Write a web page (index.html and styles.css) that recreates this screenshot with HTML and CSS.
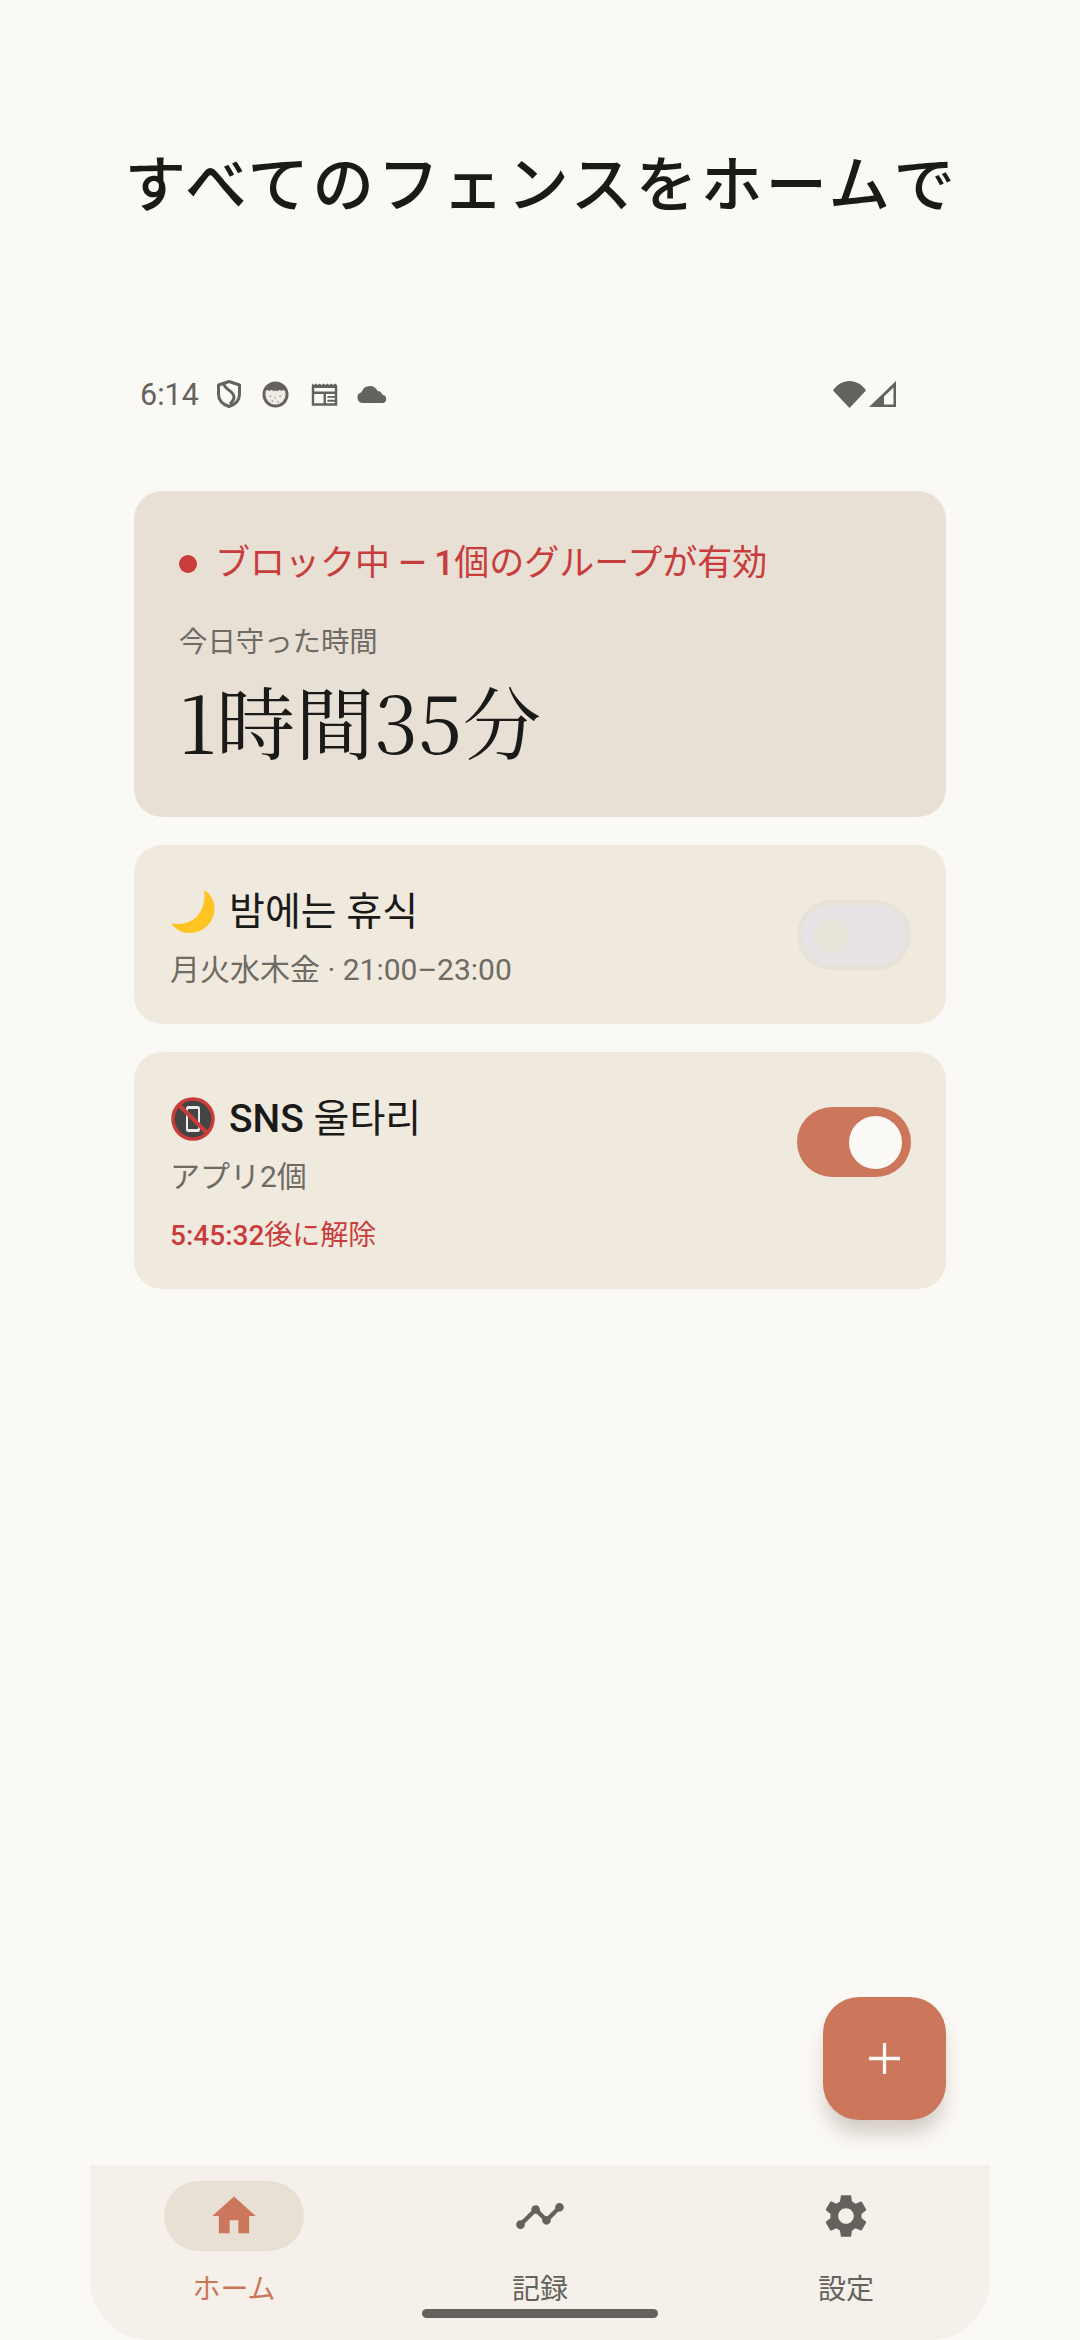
FILE: index.html
```html
<!DOCTYPE html>
<html lang="ja">

<head>
    <meta charset="UTF-8">
    <meta name="viewport" content="width=device-width, initial-scale=1.0">
    <title>Fence</title>
    <link rel="stylesheet" href="styles.css">
</head>

<body>
    <h1 class="headline">すべてのフェンスをホームで</h1>

    <div class="device">
        <div class="status-bar">
            <span class="status-time">6:14</span>
            <svg class="status-icon shield" viewBox="0 0 24 28">
                <path d="M12 1.5 22.5 5v9c0 6-4.500 10.500-10.500 12.500C6 24.500 1.500 20 1.500 14V5z" fill="none" stroke="currentColor" stroke-width="3" stroke-linejoin="round" />
                <path d="M7 4c0 5 10 7 10 13 0 3-2 5-4 7" fill="none" stroke="currentColor" stroke-width="3" />
            </svg>
            <svg class="status-icon face" viewBox="0 0 28 28">
                <circle cx="14" cy="14" r="12" fill="#efeae3" stroke="currentColor" stroke-width="3" />
                <path d="M3.500 11C5 5 9 2.500 14 2.500S23 5 24.500 11c-2-2-3-2.500-4-.5-1.500-1.500-3-1.500-4 0-1.500-1-3-1-4.500 0-1.500-1.500-3-1.500-4.500 0-1-1.500-2-1.500-4 .5z" fill="currentColor" />
                <path d="M8 15h1.500v1.500H8zM13 17h1.500v1.500H13zM18 15h1.500v1.500H18zM10 20h1.500v1.500H10zM16 21h1.500v1.500H16z" fill="#a09d96" />
            </svg>
            <svg class="status-icon paper" viewBox="0 0 28 25">
                <path d="M1 1.500 3 3l2-1.500L7 3l2-1.500L11 3l2-1.500L15 3l2-1.500L19 3l2-1.500L23 3l2-1.500L27 3v3H1z" fill="currentColor" />
                <path d="M2 5h24v18.500H2z" fill="none" stroke="currentColor" stroke-width="2.500" />
                <path d="M2 10h24v2.500H2zM13 12h2.500v11H13zM17 14.500h8v2h-8zM17 18.500h8v2h-8z" fill="currentColor" />
            </svg>
            <svg class="status-icon cloud" viewBox="0 0 31 18">
                <path d="M6 18a5.500 5.500 0 0 1-1.500-10.800A9 9 0 0 1 13 1c3.500 0 6.300 2 7.600 5a5.500 5.500 0 0 1 5 4.100A4 4 0 0 1 26 18z" fill="currentColor" />
            </svg>
            <span class="status-right">
                <svg class="wifi" viewBox="0 0 33 27">
                    <path d="M0 9.500C4 3.500 10 0 16.500 0S29 3.500 33 9.500L16.500 27z" fill="currentColor" />
                </svg>
                <svg class="signal" viewBox="0 0 27 26">
                    <path fill-rule="evenodd" d="M27 0v26H0zM24.500 6.500 15 15.500v8h9.500z" fill="currentColor" />
                </svg>
            </span>
        </div>

        <main class="cards">
            <section class="summary-card">
                <div class="blocking-line">
                    <span class="red-dot"></span>
                    <span>ブロック中 <b>— 1</b>個のグループが有効</span>
                </div>
                <div class="saved-label">今日守った時間</div>
                <div class="saved-time">1時間35分</div>
            </section>

            <section class="group-card">
                <div class="group-info">
                    <div class="group-title">
                        <svg class="group-emoji" viewBox="0 0 44 44">
                            <path d="M33 0c9 5 13 16 9 27-4 11-15 17-26 16C9 42 3 38 0 33c7 2 16 1 23-4 8-6 12-18 10-29z" fill="#fdc423" />
                        </svg>
                        <span>밤에는 휴식</span>
                    </div>
                    <div class="group-sub">月火水木金 · 21:00–23:00</div>
                </div>
                <span class="switch"><span class="knob"></span></span>
            </section>

            <section class="group-card">
                <div class="group-info">
                    <div class="group-title">
                        <svg class="group-emoji" viewBox="0 0 44 44">
                            <circle cx="22" cy="22" r="20" fill="#444" stroke="#c93c3c" stroke-width="3.500" />
                            <rect x="15" y="9" width="14" height="26" rx="2.500" fill="#ececec" />
                            <rect x="17" y="12" width="10" height="20" fill="#444" />
                            <path d="M8 8 36 36" stroke="#c93c3c" stroke-width="4" />
                        </svg>
                        <span><b>SNS</b> 울타리</span>
                    </div>
                    <div class="group-sub">アプリ2個</div>
                    <div class="group-timer"><b>5:45:32</b>後に解除</div>
                </div>
                <span class="switch on"><span class="knob"></span></span>
            </section>
        </main>

        <button class="fab" type="button">
            <svg viewBox="0 0 32 32"><path d="M14.300 0h3.400v14.300H32v3.400H17.700V32h-3.400V17.700H0v-3.400h14.300z" fill="currentColor" /></svg>
        </button>

        <nav class="bottom-nav">
            <a class="nav-item active" href="#home">
                <span class="nav-icon">
                    <svg viewBox="0 0 24 24"><path d="M10 20v-6h4v6h5v-8h3L12 3 2 12h3v8z" fill="currentColor" /></svg>
                </span>
                <span class="nav-label">ホーム</span>
            </a>
            <a class="nav-item" href="#history">
                <span class="nav-icon">
                    <svg viewBox="0 0 24 24"><path d="M23 8c0 1.100-.9 2-2 2-.18 0-.35-.02-.51-.07l-3.560 3.550c.05.16.07.34.07.52 0 1.100-.9 2-2 2s-2-.9-2-2c0-.18.02-.36.07-.52l-2.550-2.550c-.16.05-.34.07-.52.07s-.36-.02-.52-.07l-4.550 4.560c.05.16.07.33.07.51 0 1.100-.9 2-2 2s-2-.9-2-2 .9-2 2-2c.18 0 .35.02.51.07l4.560-4.550C8.020 9.360 8 9.180 8 9c0-1.100.9-2 2-2s2 .9 2 2c0 .18-.02.36-.07.52l2.550 2.550c.16-.05.34-.07.52-.07s.36.02.52.07l3.550-3.560C19.020 8.350 19 8.180 19 8c0-1.100.9-2 2-2s2 .9 2 2z" fill="currentColor" /></svg>
                </span>
                <span class="nav-label">記録</span>
            </a>
            <a class="nav-item" href="#settings">
                <span class="nav-icon">
                    <svg viewBox="0 0 24 24"><path d="M19.140 12.940c.04-.3.06-.61.06-.94 0-.32-.02-.64-.07-.94l2.030-1.580a.49.49 0 0 0 .12-.61l-1.920-3.320a.488.488 0 0 0-.59-.22l-2.390.96c-.5-.38-1.030-.7-1.620-.94l-.36-2.540a.484.484 0 0 0-.48-.41h-3.840c-.24 0-.43.17-.47.41l-.36 2.540c-.59.24-1.130.57-1.620.94l-2.390-.96c-.22-.08-.47 0-.59.22L2.740 8.870c-.12.21-.08.47.12.61l2.030 1.580c-.05.3-.09.63-.09.94s.02.64.07.94l-2.030 1.580a.49.49 0 0 0-.12.61l1.920 3.320c.12.22.37.29.59.22l2.390-.96c.5.38 1.030.7 1.620.94l.36 2.540c.05.24.24.41.48.41h3.840c.24 0 .44-.17.47-.41l.36-2.540c.59-.24 1.130-.56 1.620-.94l2.390.96c.22.08.47 0 .59-.22l1.920-3.320c.12-.22.07-.47-.12-.61l-2.010-1.580zM12 15.600c-1.980 0-3.600-1.620-3.600-3.600s1.620-3.600 3.600-3.600 3.600 1.620 3.600 3.600-1.620 3.600-3.600 3.600z" fill="currentColor" /></svg>
                </span>
                <span class="nav-label">設定</span>
            </a>
            <span class="home-indicator"></span>
        </nav>
    </div>
</body>

</html>
```

FILE: styles.css
```css
* {
    box-sizing: border-box;
}

body {
    margin: 0;
    width: 1080px;
    height: 2340px;
    display: flex;
    flex-direction: column;
    background-color: #fbf9f5;
    color: #1a1a18;
    font-family: Roboto, "Noto Sans CJK JP", sans-serif;
    overflow: hidden;
}

b {
    font-weight: 500;
}

.headline {
    margin: 0;
    padding: 134px 0 0 3px;
    height: 360px;
    text-align: center;
    font-family: "Noto Sans CJK JP", sans-serif;
    font-size: 61.5px;
    line-height: 94px;
    font-weight: 500;
    letter-spacing: 3.4px;
    white-space: nowrap;
}

.device {
    position: relative;
    flex: 1;
    margin: 0 90px;
    display: flex;
    flex-direction: column;
}

.status-bar {
    display: flex;
    align-items: center;
    height: 68px;
    padding-left: 50px;
    color: #64625c;
}

.status-time {
    width: 77px;
    font-size: 30.5px;
}

.status-icon {
    display: block;
}

.shield {
    width: 24px;
    height: 28px;
    margin-right: 21px;
}

.face {
    width: 27px;
    height: 27px;
    margin-right: 22px;
}

.paper {
    width: 27px;
    height: 24px;
    margin-right: 19px;
}

.cloud {
    width: 31px;
    height: 18px;
}

.status-right {
    margin-left: auto;
    margin-right: 94px;
    display: flex;
    align-items: center;
    gap: 3px;
}

.wifi {
    width: 33px;
    height: 27px;
}

.signal {
    width: 27px;
    height: 26px;
}

.cards {
    display: flex;
    flex-direction: column;
    gap: 28px;
    margin: 63px 44px 0;
}

.summary-card {
    height: 326px;
    padding: 47px 45px 0;
    border-radius: 28px;
    background-color: #e8e0d4;
}

.blocking-line {
    display: flex;
    align-items: center;
    gap: 18px;
    color: #c93c3c;
    font-size: 35px;
    line-height: 52px;
}

.red-dot {
    width: 18px;
    height: 18px;
    border-radius: 50%;
    background-color: #c93c3c;
}

.saved-label {
    margin-top: 33px;
    color: #6e6b65;
    font-size: 28.4px;
    line-height: 40px;
}

.saved-time {
    margin-top: 11px;
    font-family: "Noto Serif CJK JP", "Liberation Serif", "Noto Sans CJK JP", serif;
    font-size: 79px;
    line-height: 92px;
}

.group-card {
    display: flex;
    align-items: flex-start;
    justify-content: space-between;
    padding: 38px 35px 32px 36px;
    border-radius: 28px;
    background-color: #f0e9de;
}

.group-info {
    min-width: 0;
}

.group-title {
    display: flex;
    align-items: center;
    gap: 14px;
    font-family: Roboto, "Noto Sans CJK KR", sans-serif;
    font-size: 39px;
    line-height: 58px;
}

.group-emoji {
    width: 44px;
    height: 44px;
    margin-left: 1px;
    flex: none;
}

.group-sub {
    margin-top: 7px;
    color: #6e6b65;
    font-size: 30px;
    line-height: 44px;
}

.group-timer {
    margin-top: 15px;
    color: #c93c3c;
    font-size: 28px;
    line-height: 43px;
}

.switch {
    flex: none;
    display: flex;
    align-items: center;
    width: 114px;
    height: 70px;
    margin-top: 17px;
    padding-left: 12px;
    border: 5px solid #e6e2d8;
    border-radius: 35px;
    background-color: #e6e2e6;
}

.knob {
    width: 35px;
    height: 35px;
    border-radius: 50%;
    background-color: #e6e3d9;
}

.switch.on {
    justify-content: flex-end;
    padding: 0 9px 0 0;
    border: 0;
    background-color: #cc775c;
}

.switch.on .knob {
    width: 53px;
    height: 53px;
    background-color: #fbf9f5;
}

.fab {
    position: absolute;
    right: 44px;
    bottom: 220px;
    display: flex;
    align-items: center;
    justify-content: center;
    width: 123px;
    height: 123px;
    padding: 0;
    border: 0;
    border-radius: 36px;
    background-color: #cc775c;
    color: #fbf9f5;
    box-shadow: 0 16px 18px -2px rgba(90, 70, 55, 0.24);
}

.fab svg {
    width: 31px;
    height: 31px;
}

.bottom-nav {
    position: relative;
    margin-top: auto;
    height: 175px;
    display: flex;
    justify-content: space-between;
    padding: 16px 74px 0;
    border-radius: 0 0 60px 60px;
    background-color: #f5f0e9;
}

.nav-item {
    width: 140px;
    display: flex;
    flex-direction: column;
    align-items: center;
    color: #64625c;
    text-decoration: none;
}

.nav-icon {
    width: 140px;
    height: 70px;
    display: flex;
    align-items: center;
    justify-content: center;
    border-radius: 35px;
}

.nav-icon svg {
    width: 52px;
    height: 52px;
}

.nav-label {
    margin-top: 19px;
    font-size: 28px;
    line-height: 40px;
}

.nav-item.active {
    color: #cc775c;
}

.nav-item.active .nav-icon {
    background-color: #e8e0d4;
}

.home-indicator {
    position: absolute;
    left: 332px;
    bottom: 22px;
    width: 236px;
    height: 9px;
    border-radius: 5px;
    background-color: #64625c;
}
```
